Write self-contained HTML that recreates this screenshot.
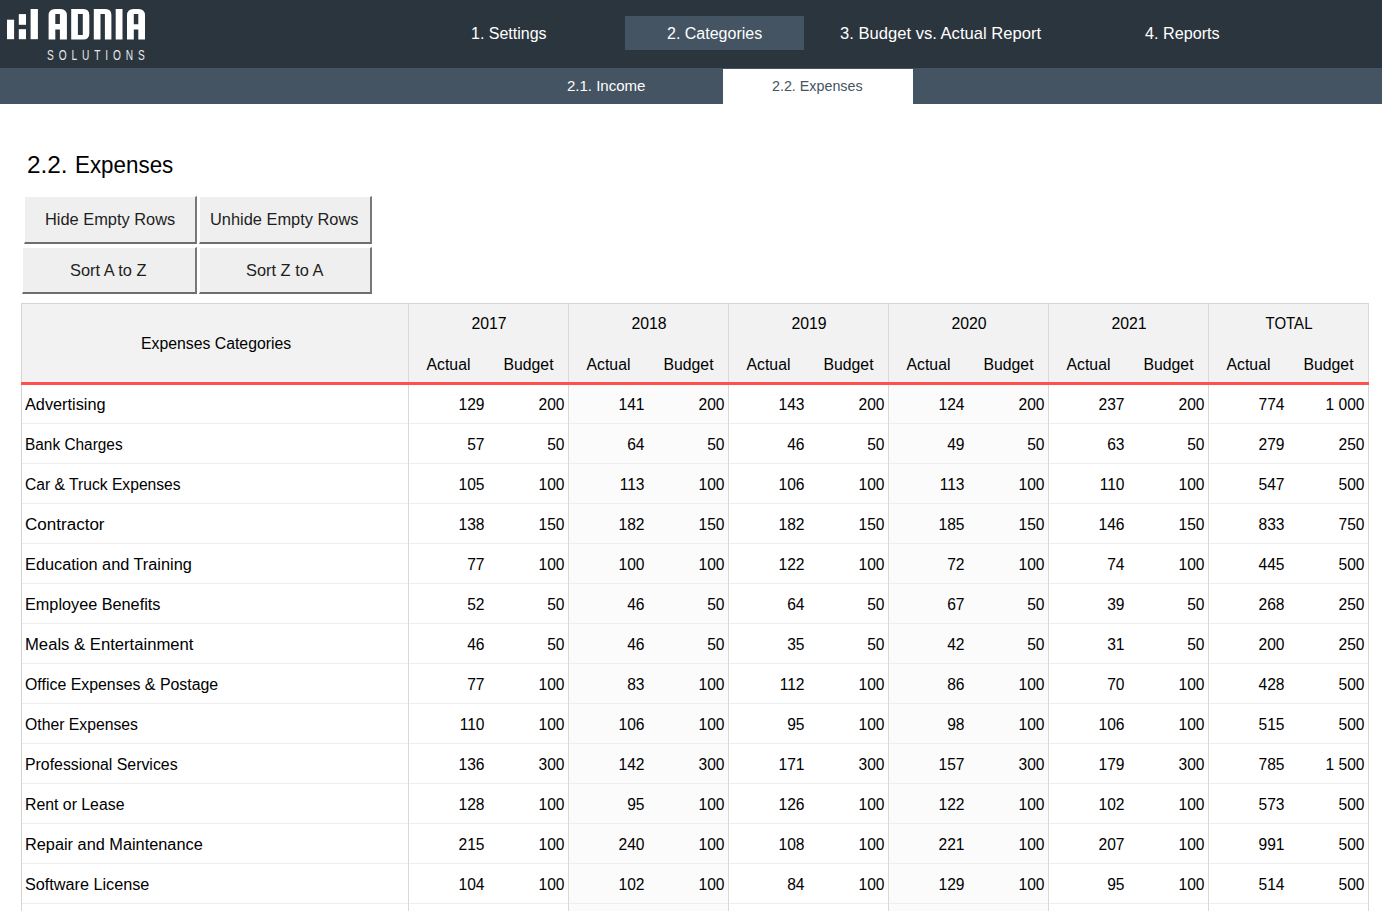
<!DOCTYPE html><html><head><meta charset="utf-8"><style>
*{margin:0;padding:0;box-sizing:border-box}
html,body{width:1382px;height:911px;overflow:hidden;background:#fff}
body{position:relative;font-family:"Liberation Sans",sans-serif;color:#000}
.a{position:absolute}
.t{position:absolute;white-space:nowrap;line-height:1}
#hdr{left:0;top:0;width:1382px;height:68px;background:#2b353e}
#sub{left:0;top:68px;width:1382px;height:36px;background:#445462}
.nav{color:#fff;font-size:16px}
.btn{position:absolute;background:#efefef;border-left:1px solid #fff;border-top:1px solid #fff;border-right:2px solid #787878;border-bottom:2px solid #6e6e6e}
.btn span{position:absolute;white-space:nowrap;line-height:1;font-size:16.4px;color:#1e1e1e}
.hd{font-size:15.8px}
.c{font-size:15.8px}
.n{font-size:15.6px;text-align:right}
</style></head><body>
<div id="hdr" class="a"></div>
<div id="sub" class="a"></div>
<svg class="a" style="left:0;top:0" width="160" height="68" viewBox="0 0 160 68">
<g fill="#fff">
<rect x="7" y="19.7" width="7.1" height="19.5"/>
<rect x="18.8" y="14.1" width="7.2" height="10.7"/>
<rect x="18.8" y="29.2" width="7.2" height="10"/>
<rect x="30.6" y="9" width="7.3" height="30.2"/>
<path fill-rule="evenodd" d="M48.6 39.5V15.5Q48.6 9 55.1 9H60.4Q66.9 9 66.9 15.5V39.5H59.9V29.5H55.3V39.5ZM55.3 13.9V24H59.9V13.9Z"/>
<path fill-rule="evenodd" d="M71.2 9H83.3Q89.3 9 89.3 15V33.5Q89.3 39.5 83.3 39.5H71.2ZM77.9 14V34.9H82.8V14Z"/>
<path d="M93.8 9H105.4Q111.4 9 111.4 15V39.5H104.9V14H100.5V39.5H93.8Z"/>
<rect x="115.7" y="9" width="6.8" height="30.5"/>
<path fill-rule="evenodd" d="M127 39.5V15.5Q127 9 133.5 9H138.5Q145 9 145 15.5V39.5H138.3V29.5H133.8V39.5ZM133.8 14V24.3H138.3V14Z"/>
</g></svg>
<div class="t" style="left:47px;top:47.5px;font-size:14.5px;color:#e8e8e8;letter-spacing:7px;transform:scaleX(0.7);transform-origin:0 0">SOLUTIONS</div>
<div class="a" style="left:625px;top:16px;width:179px;height:34px;background:#445462"></div>
<div class="t nav" style="left:471px;top:26px">1. Settings</div>
<div class="t nav" style="left:667px;top:26px">2. Categories</div>
<div class="t nav" style="left:840px;top:26px;font-size:16.6px">3. Budget vs. Actual Report</div>
<div class="t nav" style="left:1145px;top:25px;font-size:16.2px">4. Reports</div>
<div class="a" style="left:723px;top:69px;width:190px;height:35px;background:#fff"></div>
<div class="t" style="left:567px;top:78px;font-size:15px;color:#fff">2.1. Income</div>
<div class="t" style="left:772px;top:79px;font-size:14.3px;color:#445462">2.2. Expenses</div>
<div class="t" style="left:27px;top:154px;font-size:23.2px;color:#000;transform:scaleX(1.05);transform-origin:0 0">2.2.</div>
<div class="t" style="left:75px;top:154px;font-size:23.2px;color:#000;transform:scaleX(0.965);transform-origin:0 0">Expenses</div>
<div class="btn" style="left:24px;top:196px;width:173px;height:48px"><span style="left:20px;top:14px">Hide Empty Rows</span></div>
<div class="btn" style="left:199px;top:196px;width:173px;height:48px"><span style="left:10px;top:14px">Unhide Empty Rows</span></div>
<div class="btn" style="left:22px;top:247px;width:175px;height:47px"><span style="left:47px;top:14px">Sort A to Z</span></div>
<div class="btn" style="left:199px;top:247px;width:173px;height:47px"><span style="left:46px;top:14px">Sort Z to A</span></div>
<div class="a" style="left:21px;top:303px;width:1348px;height:79px;background:#f2f2f2"></div>
<div class="a" style="left:568px;top:385px;width:160px;height:526px;background:#fbfbfb"></div>
<div class="a" style="left:888px;top:385px;width:160px;height:526px;background:#fbfbfb"></div>
<div class="a" style="left:22px;top:423px;width:1346px;height:1px;background:#eeeeee"></div>
<div class="a" style="left:22px;top:463px;width:1346px;height:1px;background:#eeeeee"></div>
<div class="a" style="left:22px;top:503px;width:1346px;height:1px;background:#eeeeee"></div>
<div class="a" style="left:22px;top:543px;width:1346px;height:1px;background:#eeeeee"></div>
<div class="a" style="left:22px;top:583px;width:1346px;height:1px;background:#eeeeee"></div>
<div class="a" style="left:22px;top:623px;width:1346px;height:1px;background:#eeeeee"></div>
<div class="a" style="left:22px;top:663px;width:1346px;height:1px;background:#eeeeee"></div>
<div class="a" style="left:22px;top:703px;width:1346px;height:1px;background:#eeeeee"></div>
<div class="a" style="left:22px;top:743px;width:1346px;height:1px;background:#eeeeee"></div>
<div class="a" style="left:22px;top:783px;width:1346px;height:1px;background:#eeeeee"></div>
<div class="a" style="left:22px;top:823px;width:1346px;height:1px;background:#eeeeee"></div>
<div class="a" style="left:22px;top:863px;width:1346px;height:1px;background:#eeeeee"></div>
<div class="a" style="left:22px;top:903px;width:1346px;height:1px;background:#eeeeee"></div>
<div class="a" style="left:22px;top:943px;width:1346px;height:1px;background:#eeeeee"></div>
<div class="a" style="left:21px;top:303px;width:1348px;height:1px;background:#d4d4d4"></div>
<div class="a" style="left:21px;top:303px;width:1px;height:608px;background:#d4d4d4"></div>
<div class="a" style="left:408px;top:303px;width:1px;height:608px;background:#d9d9d9"></div>
<div class="a" style="left:568px;top:303px;width:1px;height:608px;background:#d9d9d9"></div>
<div class="a" style="left:728px;top:303px;width:1px;height:608px;background:#d9d9d9"></div>
<div class="a" style="left:888px;top:303px;width:1px;height:608px;background:#d9d9d9"></div>
<div class="a" style="left:1048px;top:303px;width:1px;height:608px;background:#d9d9d9"></div>
<div class="a" style="left:1208px;top:303px;width:1px;height:608px;background:#d9d9d9"></div>
<div class="a" style="left:1368px;top:303px;width:1px;height:608px;background:#d9d9d9"></div>
<div class="a" style="left:21px;top:382px;width:1348px;height:3px;background:#ff504d"></div>
<div class="t hd" style="left:141px;top:336px">Expenses Categories</div>
<div class="t hd" style="left:409px;top:316px;width:160px;text-align:center;">2017</div>
<div class="t hd" style="left:408px;top:357px;width:80px;text-align:center;padding-left:1px">Actual</div>
<div class="t hd" style="left:488px;top:357px;width:80px;text-align:center;padding-left:1px">Budget</div>
<div class="t hd" style="left:569px;top:316px;width:160px;text-align:center;">2018</div>
<div class="t hd" style="left:568px;top:357px;width:80px;text-align:center;padding-left:1px">Actual</div>
<div class="t hd" style="left:648px;top:357px;width:80px;text-align:center;padding-left:1px">Budget</div>
<div class="t hd" style="left:729px;top:316px;width:160px;text-align:center;">2019</div>
<div class="t hd" style="left:728px;top:357px;width:80px;text-align:center;padding-left:1px">Actual</div>
<div class="t hd" style="left:808px;top:357px;width:80px;text-align:center;padding-left:1px">Budget</div>
<div class="t hd" style="left:889px;top:316px;width:160px;text-align:center;">2020</div>
<div class="t hd" style="left:888px;top:357px;width:80px;text-align:center;padding-left:1px">Actual</div>
<div class="t hd" style="left:968px;top:357px;width:80px;text-align:center;padding-left:1px">Budget</div>
<div class="t hd" style="left:1049px;top:316px;width:160px;text-align:center;">2021</div>
<div class="t hd" style="left:1048px;top:357px;width:80px;text-align:center;padding-left:1px">Actual</div>
<div class="t hd" style="left:1128px;top:357px;width:80px;text-align:center;padding-left:1px">Budget</div>
<div class="t hd" style="left:1209px;top:316px;width:160px;text-align:center;transform:scaleX(0.95);">TOTAL</div>
<div class="t hd" style="left:1208px;top:357px;width:80px;text-align:center;padding-left:1px">Actual</div>
<div class="t hd" style="left:1288px;top:357px;width:80px;text-align:center;padding-left:1px">Budget</div>
<div class="t c" style="left:25px;top:397px;transform:scaleX(1.0308);transform-origin:0 0">Advertising</div>
<div class="t n" style="left:408px;top:397px;width:76.5px">129</div>
<div class="t n" style="left:488px;top:397px;width:76.5px">200</div>
<div class="t n" style="left:568px;top:397px;width:76.5px">141</div>
<div class="t n" style="left:648px;top:397px;width:76.5px">200</div>
<div class="t n" style="left:728px;top:397px;width:76.5px">143</div>
<div class="t n" style="left:808px;top:397px;width:76.5px">200</div>
<div class="t n" style="left:888px;top:397px;width:76.5px">124</div>
<div class="t n" style="left:968px;top:397px;width:76.5px">200</div>
<div class="t n" style="left:1048px;top:397px;width:76.5px">237</div>
<div class="t n" style="left:1128px;top:397px;width:76.5px">200</div>
<div class="t n" style="left:1208px;top:397px;width:76.5px">774</div>
<div class="t n" style="left:1288px;top:397px;width:76.5px">1&nbsp;000</div>
<div class="t c" style="left:25px;top:437px;transform:scaleX(0.975);transform-origin:0 0">Bank Charges</div>
<div class="t n" style="left:408px;top:437px;width:76.5px">57</div>
<div class="t n" style="left:488px;top:437px;width:76.5px">50</div>
<div class="t n" style="left:568px;top:437px;width:76.5px">64</div>
<div class="t n" style="left:648px;top:437px;width:76.5px">50</div>
<div class="t n" style="left:728px;top:437px;width:76.5px">46</div>
<div class="t n" style="left:808px;top:437px;width:76.5px">50</div>
<div class="t n" style="left:888px;top:437px;width:76.5px">49</div>
<div class="t n" style="left:968px;top:437px;width:76.5px">50</div>
<div class="t n" style="left:1048px;top:437px;width:76.5px">63</div>
<div class="t n" style="left:1128px;top:437px;width:76.5px">50</div>
<div class="t n" style="left:1208px;top:437px;width:76.5px">279</div>
<div class="t n" style="left:1288px;top:437px;width:76.5px">250</div>
<div class="t c" style="left:25px;top:477px;transform:scaleX(0.9904);transform-origin:0 0">Car &amp; Truck Expenses</div>
<div class="t n" style="left:408px;top:477px;width:76.5px">105</div>
<div class="t n" style="left:488px;top:477px;width:76.5px">100</div>
<div class="t n" style="left:568px;top:477px;width:76.5px">113</div>
<div class="t n" style="left:648px;top:477px;width:76.5px">100</div>
<div class="t n" style="left:728px;top:477px;width:76.5px">106</div>
<div class="t n" style="left:808px;top:477px;width:76.5px">100</div>
<div class="t n" style="left:888px;top:477px;width:76.5px">113</div>
<div class="t n" style="left:968px;top:477px;width:76.5px">100</div>
<div class="t n" style="left:1048px;top:477px;width:76.5px">110</div>
<div class="t n" style="left:1128px;top:477px;width:76.5px">100</div>
<div class="t n" style="left:1208px;top:477px;width:76.5px">547</div>
<div class="t n" style="left:1288px;top:477px;width:76.5px">500</div>
<div class="t c" style="left:25px;top:517px;transform:scaleX(1.0784);transform-origin:0 0">Contractor</div>
<div class="t n" style="left:408px;top:517px;width:76.5px">138</div>
<div class="t n" style="left:488px;top:517px;width:76.5px">150</div>
<div class="t n" style="left:568px;top:517px;width:76.5px">182</div>
<div class="t n" style="left:648px;top:517px;width:76.5px">150</div>
<div class="t n" style="left:728px;top:517px;width:76.5px">182</div>
<div class="t n" style="left:808px;top:517px;width:76.5px">150</div>
<div class="t n" style="left:888px;top:517px;width:76.5px">185</div>
<div class="t n" style="left:968px;top:517px;width:76.5px">150</div>
<div class="t n" style="left:1048px;top:517px;width:76.5px">146</div>
<div class="t n" style="left:1128px;top:517px;width:76.5px">150</div>
<div class="t n" style="left:1208px;top:517px;width:76.5px">833</div>
<div class="t n" style="left:1288px;top:517px;width:76.5px">750</div>
<div class="t c" style="left:25px;top:557px;transform:scaleX(1.0323);transform-origin:0 0">Education and Training</div>
<div class="t n" style="left:408px;top:557px;width:76.5px">77</div>
<div class="t n" style="left:488px;top:557px;width:76.5px">100</div>
<div class="t n" style="left:568px;top:557px;width:76.5px">100</div>
<div class="t n" style="left:648px;top:557px;width:76.5px">100</div>
<div class="t n" style="left:728px;top:557px;width:76.5px">122</div>
<div class="t n" style="left:808px;top:557px;width:76.5px">100</div>
<div class="t n" style="left:888px;top:557px;width:76.5px">72</div>
<div class="t n" style="left:968px;top:557px;width:76.5px">100</div>
<div class="t n" style="left:1048px;top:557px;width:76.5px">74</div>
<div class="t n" style="left:1128px;top:557px;width:76.5px">100</div>
<div class="t n" style="left:1208px;top:557px;width:76.5px">445</div>
<div class="t n" style="left:1288px;top:557px;width:76.5px">500</div>
<div class="t c" style="left:25px;top:597px;transform:scaleX(1.028);transform-origin:0 0">Employee Benefits</div>
<div class="t n" style="left:408px;top:597px;width:76.5px">52</div>
<div class="t n" style="left:488px;top:597px;width:76.5px">50</div>
<div class="t n" style="left:568px;top:597px;width:76.5px">46</div>
<div class="t n" style="left:648px;top:597px;width:76.5px">50</div>
<div class="t n" style="left:728px;top:597px;width:76.5px">64</div>
<div class="t n" style="left:808px;top:597px;width:76.5px">50</div>
<div class="t n" style="left:888px;top:597px;width:76.5px">67</div>
<div class="t n" style="left:968px;top:597px;width:76.5px">50</div>
<div class="t n" style="left:1048px;top:597px;width:76.5px">39</div>
<div class="t n" style="left:1128px;top:597px;width:76.5px">50</div>
<div class="t n" style="left:1208px;top:597px;width:76.5px">268</div>
<div class="t n" style="left:1288px;top:597px;width:76.5px">250</div>
<div class="t c" style="left:25px;top:637px;transform:scaleX(1.0544);transform-origin:0 0">Meals &amp; Entertainment</div>
<div class="t n" style="left:408px;top:637px;width:76.5px">46</div>
<div class="t n" style="left:488px;top:637px;width:76.5px">50</div>
<div class="t n" style="left:568px;top:637px;width:76.5px">46</div>
<div class="t n" style="left:648px;top:637px;width:76.5px">50</div>
<div class="t n" style="left:728px;top:637px;width:76.5px">35</div>
<div class="t n" style="left:808px;top:637px;width:76.5px">50</div>
<div class="t n" style="left:888px;top:637px;width:76.5px">42</div>
<div class="t n" style="left:968px;top:637px;width:76.5px">50</div>
<div class="t n" style="left:1048px;top:637px;width:76.5px">31</div>
<div class="t n" style="left:1128px;top:637px;width:76.5px">50</div>
<div class="t n" style="left:1208px;top:637px;width:76.5px">200</div>
<div class="t n" style="left:1288px;top:637px;width:76.5px">250</div>
<div class="t c" style="left:25px;top:677px;transform:scaleX(1.0062);transform-origin:0 0">Office Expenses &amp; Postage</div>
<div class="t n" style="left:408px;top:677px;width:76.5px">77</div>
<div class="t n" style="left:488px;top:677px;width:76.5px">100</div>
<div class="t n" style="left:568px;top:677px;width:76.5px">83</div>
<div class="t n" style="left:648px;top:677px;width:76.5px">100</div>
<div class="t n" style="left:728px;top:677px;width:76.5px">112</div>
<div class="t n" style="left:808px;top:677px;width:76.5px">100</div>
<div class="t n" style="left:888px;top:677px;width:76.5px">86</div>
<div class="t n" style="left:968px;top:677px;width:76.5px">100</div>
<div class="t n" style="left:1048px;top:677px;width:76.5px">70</div>
<div class="t n" style="left:1128px;top:677px;width:76.5px">100</div>
<div class="t n" style="left:1208px;top:677px;width:76.5px">428</div>
<div class="t n" style="left:1288px;top:677px;width:76.5px">500</div>
<div class="t c" style="left:25px;top:717px;transform:scaleX(0.9973);transform-origin:0 0">Other Expenses</div>
<div class="t n" style="left:408px;top:717px;width:76.5px">110</div>
<div class="t n" style="left:488px;top:717px;width:76.5px">100</div>
<div class="t n" style="left:568px;top:717px;width:76.5px">106</div>
<div class="t n" style="left:648px;top:717px;width:76.5px">100</div>
<div class="t n" style="left:728px;top:717px;width:76.5px">95</div>
<div class="t n" style="left:808px;top:717px;width:76.5px">100</div>
<div class="t n" style="left:888px;top:717px;width:76.5px">98</div>
<div class="t n" style="left:968px;top:717px;width:76.5px">100</div>
<div class="t n" style="left:1048px;top:717px;width:76.5px">106</div>
<div class="t n" style="left:1128px;top:717px;width:76.5px">100</div>
<div class="t n" style="left:1208px;top:717px;width:76.5px">515</div>
<div class="t n" style="left:1288px;top:717px;width:76.5px">500</div>
<div class="t c" style="left:25px;top:757px;transform:scaleX(1.0046);transform-origin:0 0">Professional Services</div>
<div class="t n" style="left:408px;top:757px;width:76.5px">136</div>
<div class="t n" style="left:488px;top:757px;width:76.5px">300</div>
<div class="t n" style="left:568px;top:757px;width:76.5px">142</div>
<div class="t n" style="left:648px;top:757px;width:76.5px">300</div>
<div class="t n" style="left:728px;top:757px;width:76.5px">171</div>
<div class="t n" style="left:808px;top:757px;width:76.5px">300</div>
<div class="t n" style="left:888px;top:757px;width:76.5px">157</div>
<div class="t n" style="left:968px;top:757px;width:76.5px">300</div>
<div class="t n" style="left:1048px;top:757px;width:76.5px">179</div>
<div class="t n" style="left:1128px;top:757px;width:76.5px">300</div>
<div class="t n" style="left:1208px;top:757px;width:76.5px">785</div>
<div class="t n" style="left:1288px;top:757px;width:76.5px">1&nbsp;500</div>
<div class="t c" style="left:25px;top:797px;transform:scaleX(1.002);transform-origin:0 0">Rent or Lease</div>
<div class="t n" style="left:408px;top:797px;width:76.5px">128</div>
<div class="t n" style="left:488px;top:797px;width:76.5px">100</div>
<div class="t n" style="left:568px;top:797px;width:76.5px">95</div>
<div class="t n" style="left:648px;top:797px;width:76.5px">100</div>
<div class="t n" style="left:728px;top:797px;width:76.5px">126</div>
<div class="t n" style="left:808px;top:797px;width:76.5px">100</div>
<div class="t n" style="left:888px;top:797px;width:76.5px">122</div>
<div class="t n" style="left:968px;top:797px;width:76.5px">100</div>
<div class="t n" style="left:1048px;top:797px;width:76.5px">102</div>
<div class="t n" style="left:1128px;top:797px;width:76.5px">100</div>
<div class="t n" style="left:1208px;top:797px;width:76.5px">573</div>
<div class="t n" style="left:1288px;top:797px;width:76.5px">500</div>
<div class="t c" style="left:25px;top:837px;transform:scaleX(1.0326);transform-origin:0 0">Repair and Maintenance</div>
<div class="t n" style="left:408px;top:837px;width:76.5px">215</div>
<div class="t n" style="left:488px;top:837px;width:76.5px">100</div>
<div class="t n" style="left:568px;top:837px;width:76.5px">240</div>
<div class="t n" style="left:648px;top:837px;width:76.5px">100</div>
<div class="t n" style="left:728px;top:837px;width:76.5px">108</div>
<div class="t n" style="left:808px;top:837px;width:76.5px">100</div>
<div class="t n" style="left:888px;top:837px;width:76.5px">221</div>
<div class="t n" style="left:968px;top:837px;width:76.5px">100</div>
<div class="t n" style="left:1048px;top:837px;width:76.5px">207</div>
<div class="t n" style="left:1128px;top:837px;width:76.5px">100</div>
<div class="t n" style="left:1208px;top:837px;width:76.5px">991</div>
<div class="t n" style="left:1288px;top:837px;width:76.5px">500</div>
<div class="t c" style="left:25px;top:877px;transform:scaleX(1.0264);transform-origin:0 0">Software License</div>
<div class="t n" style="left:408px;top:877px;width:76.5px">104</div>
<div class="t n" style="left:488px;top:877px;width:76.5px">100</div>
<div class="t n" style="left:568px;top:877px;width:76.5px">102</div>
<div class="t n" style="left:648px;top:877px;width:76.5px">100</div>
<div class="t n" style="left:728px;top:877px;width:76.5px">84</div>
<div class="t n" style="left:808px;top:877px;width:76.5px">100</div>
<div class="t n" style="left:888px;top:877px;width:76.5px">129</div>
<div class="t n" style="left:968px;top:877px;width:76.5px">100</div>
<div class="t n" style="left:1048px;top:877px;width:76.5px">95</div>
<div class="t n" style="left:1128px;top:877px;width:76.5px">100</div>
<div class="t n" style="left:1208px;top:877px;width:76.5px">514</div>
<div class="t n" style="left:1288px;top:877px;width:76.5px">500</div>
</body></html>
